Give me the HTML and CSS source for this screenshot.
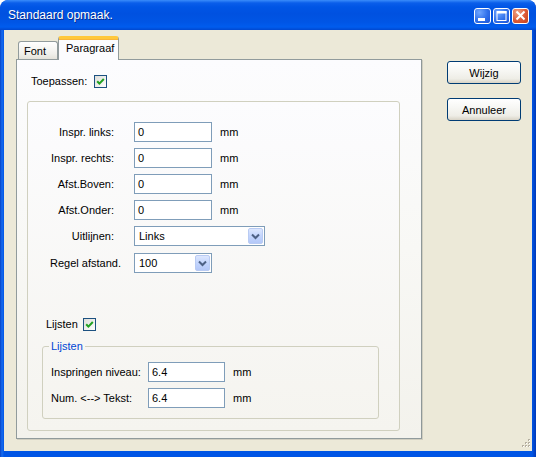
FILE: index.html
```html
<!DOCTYPE html>
<html>
<head>
<meta charset="utf-8">
<link rel="stylesheet" href="styles.css">
</head>
<body>
<div class="window">
  <div class="titlebar">
    <span class="title">Standaard opmaak.</span>
    <div class="tbtns">
      <div class="tbtn"><svg width="17" height="16" viewBox="0 0 17 16"><rect x="4" y="10" width="7" height="3" fill="#fff"/></svg></div>
      <div class="tbtn"><svg width="17" height="16" viewBox="0 0 17 16"><rect x="4" y="3.5" width="9" height="9" fill="none" stroke="#fff" stroke-width="1"/><rect x="4" y="3" width="9.5" height="2.5" fill="#fff"/></svg></div>
      <div class="tbtn close"><svg width="17" height="16" viewBox="0 0 17 16"><path d="M4.5 3.5 L12.5 11.5 M12.5 3.5 L4.5 11.5" stroke="#fff" stroke-width="2"/></svg></div>
    </div>
  </div>
  <div class="client">
    <div class="tabctl">
      <div class="tabs">
        <div class="tab">Font</div>
        <div class="tab sel">Paragraaf</div>
      </div>
      <div class="panel">
        <div class="checkrow toep">
          <span class="cblabel toeplbl">Toepassen:</span>
          <svg class="cb" width="13" height="13" viewBox="0 0 13 13"><defs><linearGradient id="cbg" x1="0" y1="0" x2="1" y2="1"><stop offset="0" stop-color="#DCDCD7"/><stop offset="1" stop-color="#FFFFFF"/></linearGradient></defs><rect x="0.5" y="0.5" width="12" height="12" fill="url(#cbg)" stroke="#1C5180"/><path d="M3.2 6.2 L5.4 8.6 L9.8 4" fill="none" stroke="#21A121" stroke-width="2"/></svg>
        </div>
        <div class="box">
          <div class="row first">
            <span class="lbl">Inspr. links:</span>
            <div class="edit">0</div>
            <span class="unit">mm</span>
          </div>
          <div class="row">
            <span class="lbl">Inspr. rechts:</span>
            <div class="edit">0</div>
            <span class="unit">mm</span>
          </div>
          <div class="row">
            <span class="lbl">Afst.Boven:</span>
            <div class="edit">0</div>
            <span class="unit">mm</span>
          </div>
          <div class="row">
            <span class="lbl">Afst.Onder:</span>
            <div class="edit">0</div>
            <span class="unit">mm</span>
          </div>
          <div class="row">
            <span class="lbl">Uitlijnen:</span>
            <div class="combo wide"><span class="ctext">Links</span><span class="cbtn"><svg width="15" height="16" viewBox="0 0 15 16"><path d="M4 6.5 L7.5 10 L11 6.5" fill="none" stroke="#4D6185" stroke-width="2"/></svg></span></div>
          </div>
          <div class="row regel">
            <span class="lbl lbl-regel">Regel afstand.</span>
            <div class="combo"><span class="ctext">100</span><span class="cbtn"><svg width="15" height="16" viewBox="0 0 15 16"><path d="M4 6.5 L7.5 10 L11 6.5" fill="none" stroke="#4D6185" stroke-width="2"/></svg></span></div>
          </div>
          <div class="checkrow lijst">
            <span class="cblabel lijstlbl">Lijsten</span>
            <svg class="cb" width="13" height="13" viewBox="0 0 13 13"><rect x="0.5" y="0.5" width="12" height="12" fill="url(#cbg)" stroke="#1C5180"/><path d="M3.2 6.2 L5.4 8.6 L9.8 4" fill="none" stroke="#21A121" stroke-width="2"/></svg>
          </div>
          <fieldset class="group">
            <legend>Lijsten</legend>
            <div class="grow">
              <span class="glbl">Inspringen niveau:</span>
              <div class="edit">6.4</div>
              <span class="unit">mm</span>
            </div>
            <div class="grow second">
              <span class="glbl">Num. &lt;--&gt; Tekst:</span>
              <div class="edit">6.4</div>
              <span class="unit">mm</span>
            </div>
          </fieldset>
        </div>
      </div>
    </div>
    <div class="btns">
      <div class="btn">Wijzig</div>
      <div class="btn">Annuleer</div>
    </div>
    <svg class="grip" width="11" height="11" viewBox="0 0 11 11">
      <g fill="#B5AFA0"><rect x="8" y="0" width="2" height="2"/><rect x="5" y="3" width="2" height="2"/><rect x="8" y="3" width="2" height="2"/><rect x="2" y="6" width="2" height="2"/><rect x="5" y="6" width="2" height="2"/><rect x="8" y="6" width="2" height="2"/></g>
      <g fill="#FFFFFF"><rect x="9" y="1" width="1" height="1"/><rect x="6" y="4" width="1" height="1"/><rect x="9" y="4" width="1" height="1"/><rect x="3" y="7" width="1" height="1"/><rect x="6" y="7" width="1" height="1"/><rect x="9" y="7" width="1" height="1"/></g>
    </svg>
  </div>
</div>
</body>
</html>
```
FILE: styles.css
```css
* { box-sizing: border-box; }
html, body {
  margin: 0;
  padding: 0;
  width: 536px;
  height: 457px;
  overflow: hidden;
  background: #ffffff;
}
body {
  font-family: "Liberation Sans", Arial, sans-serif;
  font-size: 11px;
  color: #000;
}
.window {
  width: 536px;
  height: 457px;
  background: linear-gradient(to right, #0842C4 0, #166CF0 2px, #0055E5 4px, #0055E5 532px, #0038B8 536px);
  border-radius: 8px 8px 0 0;
  overflow: hidden;
}
.titlebar {
  height: 30px;
  display: flex;
  align-items: center;
  justify-content: space-between;
  padding: 0 7px 0 8px;
  background: linear-gradient(to bottom, #3A8CFA 0, #0A5EEA 3px, #0055E5 7px, #0051E0 14px, #0055E5 22px, #005CEE 27px, #0048D0 30px);
  border-radius: 8px 8px 0 0;
}
.title {
  color: #fff;
  font-size: 12px;
  text-shadow: 1px 1px 0 #0A2A8A;
  padding-bottom: 1px;
}
.tbtns {
  display: flex;
  gap: 2px;
  padding-top: 2px;
}
.tbtn {
  width: 17px;
  height: 16px;
  border: 1px solid #fff;
  border-radius: 3px;
  background: radial-gradient(circle at 30% 25%, #6FA5FF 0, #2F6FEA 55%, #1D53D6 100%);
  display: flex;
  align-items: center;
  justify-content: center;
  overflow: hidden;
}
.tbtn svg { display: block; margin: -1px; flex: none; }
.tbtn.close {
  background: radial-gradient(circle at 30% 25%, #F0A386 0, #DB5A36 55%, #C43F1A 100%);
}
.client {
  position: relative;
  margin: 0 4px;
  height: 421px;
  background: #ECE9D8;
  display: flex;
  align-items: flex-start;
}
.tabctl {
  width: 406px;
  margin: 6px 0 0 12px;
}
.tabs {
  display: flex;
  align-items: flex-end;
  height: 23px;
  padding-left: 2px;
}
.tab {
  width: 40px;
  height: 18px;
  border: 1px solid #919B9C;
  border-bottom: none;
  border-radius: 3px 3px 0 0;
  background: linear-gradient(to bottom, #FFFFFF, #F0EFEA 70%, #E4E2DA);
  padding: 3px 0 0 5px;
  line-height: 13px;
}
.tab.sel {
  position: relative;
  z-index: 1;
  width: 61px;
  height: 24px;
  margin-bottom: -1px;
  background: #FCFCFE;
  border-top: 3px solid #FFC83C;
  box-shadow: inset 0 1px 0 #F9B53A;
  padding: 3px 0 0 7px;
  border-radius: 3px 3px 0 0;
}
.panel {
  border: 1px solid #919B9C;
  border-right-color: #8E9899;
  box-shadow: 1px 1px 0 #D0CEC0;
  background: linear-gradient(to bottom, #FCFCFE 0, #F8F8F5 50%, #F3F2EC 100%);
  padding: 15px 0 0 14px;
  height: 380px;
}
.checkrow {
  display: flex;
  align-items: center;
  height: 13px;
}
.cb { display: block; flex: none; }
.cblabel { line-height: 13px; }
.toeplbl { width: 63px; }
.lijstlbl { width: 37px; }
.box {
  width: 373px;
  height: 330px;
  margin: 13px 0 0 -4px;
  border: 1px solid #D0D0BF;
  border-radius: 3px;
  background: linear-gradient(to bottom, #FCFCFE, #F5F4EF);
}
.row {
  display: flex;
  align-items: center;
  height: 20px;
  margin-top: 6px;
}
.row.first { margin-top: 20px; }
.row.regel { margin-top: 7px; }
.lbl {
  width: 86px;
  margin-right: 20px;
  text-align: right;
}
.lbl-regel {
  width: 106px;
  margin-right: 0;
  padding-left: 22px;
  text-align: left;
}
.edit {
  width: 78px;
  height: 20px;
  border: 1px solid #7F9DB9;
  background: #fff;
  padding: 0 3px;
  line-height: 18px;
}
.unit { margin-left: 8px; }
.combo {
  width: 78px;
  height: 20px;
  border: 1px solid #7F9DB9;
  background: #fff;
  display: flex;
  align-items: center;
  justify-content: space-between;
  padding: 1px;
}
.combo.wide { width: 131px; }
.ctext { padding-left: 3px; line-height: 16px; }
.cbtn {
  width: 15px;
  height: 16px;
  border: 1px solid #B9CBF3;
  border-radius: 2px;
  background: linear-gradient(to bottom, #DDE7FE 0, #C3D5FD 50%, #B4C8F8 100%);
  overflow: hidden;
}
.cbtn svg { display: block; margin: -1px; }
.checkrow.lijst {
  margin: 45px 0 0 18px;
}
.group {
  margin: 9px 20px 0 14px;
  border: 1px solid #D0D0BF;
  border-radius: 3px;
  padding: 9px 0 10px 6px;
  min-width: 0;
}
.group legend {
  color: #0046D5;
  padding: 0 2px;
  line-height: 13px;
}
.grow {
  display: flex;
  align-items: center;
  height: 20px;
  padding-left: 2px;
}
.grow.second { margin-top: 6px; }
.glbl { width: 97px; }
.grow .edit { width: 77px; }
.btns {
  display: flex;
  flex-direction: column;
  gap: 14px;
  margin: 31px 0 0 25px;
}
.btn {
  width: 74px;
  height: 23px;
  border: 1px solid #003C74;
  border-radius: 3px;
  background: linear-gradient(to bottom, #FFFFFF 0, #F7F7F4 40%, #EEEDE6 80%, #D8D3C6 100%);
  display: flex;
  align-items: center;
  justify-content: center;
}
.grip {
  position: absolute;
  right: 1px;
  bottom: 1px;
}
```
